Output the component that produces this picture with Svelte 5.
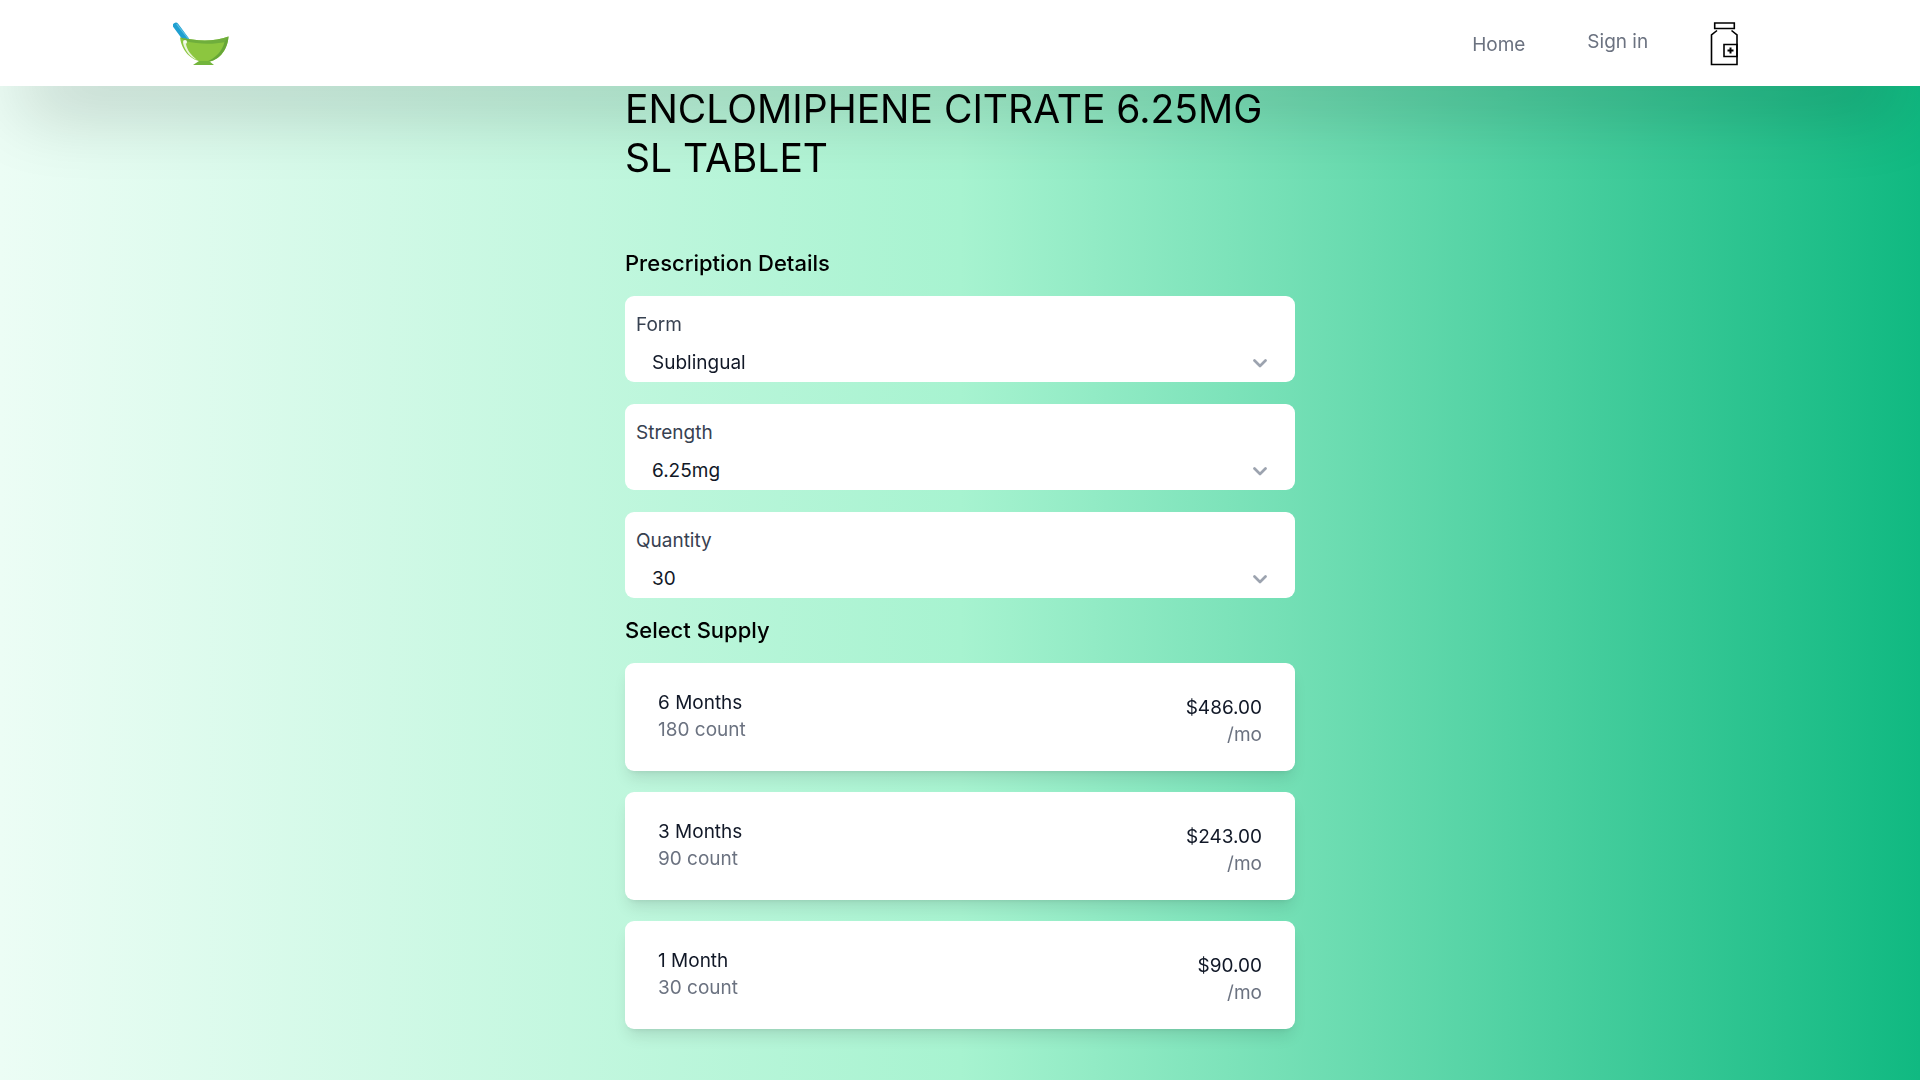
<script>
  const fields = [
    { id: 'form', label: 'Form', options: ['Sublingual'] },
    { id: 'strength', label: 'Strength', options: ['6.25mg'] },
    { id: 'quantity', label: 'Quantity', options: ['30'] },
  ];

  const supplies = [
    { id: 's6', name: '6 Months', count: '180 count', price: '$486.00' },
    { id: 's3', name: '3 Months', count: '90 count', price: '$243.00' },
    { id: 's1', name: '1 Month', count: '30 count', price: '$90.00' },
  ];

  let selected = $state('');
</script>

<div class="page">
  <header class="topbar">
    <a class="logo" href="/" aria-label="Home page">
      <svg viewBox="0 0 58 44" width="58" height="44" aria-hidden="true">
        <path d="M2.800 3.500 13.500 18" stroke="#1f9fd0" stroke-width="5.800" stroke-linecap="round" />
        <path d="M4 2.500 15.500 17" stroke="#5cc0e4" stroke-width="1.2" stroke-linecap="round" />
        <path d="M7 15.500C23 19 41 20 55.500 14.500c-1 15-11 25.500-23 25.500S9 31 7 15.500z" fill="#8cc63f" />
        <path d="M7 15.500C23 19 41 20 55.500 14.500l-3 5.500c-14 3-28 2-40-1z" fill="#6fae3c" />
        <path d="M55.500 14.500c-1 14-10 24.500-22 25.500 9-4 16-11 18-20z" fill="#66a637" />
        <path d="M10 21c2 8 7 14 14 17-6-5-10-10-11-16z" fill="#e8f5d8" />
        <circle cx="12" cy="20" r="2" fill="#f4faeb" />
        <path d="M26 39h10l5 4H20z" fill="#73b53c" />
      </svg>
    </a>
    <nav class="nav">
      <a class="home" href="/">Home</a>
      <a class="signin" href="/signin">Sign in</a>
      <a class="cart" href="/cart" aria-label="Cart">
        <svg viewBox="0 0 28 44" width="28" height="44" fill="none" stroke="#000" stroke-width="1.6" aria-hidden="true">
          <path d="M4.700 1h19.600v5.500H4.700zM7 8.500 1.500 13v29.500h25.500V13l-5.500-4.500" />
          <path d="M14 22.500h13v12H14z" />
          <path d="M20.500 25.500v6M17.500 28.500h6" stroke-width="2" />
        </svg>
      </a>
    </nav>
  </header>

  <main class="content">
    <h1>ENCLOMIPHENE CITRATE 6.25MG SL TABLET</h1>

    <h2>Prescription Details</h2>
    <div class="fields">
      {#each fields as field (field.id)}
        <div class="field">
          <label for={field.id}>{field.label}</label>
          <div class="select-wrap">
            <select id={field.id}>
              {#each field.options as option}
                <option>{option}</option>
              {/each}
            </select>
            <svg viewBox="0 0 14 9" width="14" height="9" aria-hidden="true">
              <path d="M1.500 1.500 7 7l5.500-5.500" fill="none" stroke="#9ca3af" stroke-width="2.700" stroke-linecap="round" stroke-linejoin="round" />
            </svg>
          </div>
        </div>
      {/each}
    </div>

    <h2 id="supply-title">Select Supply</h2>
    <div class="supplies" role="radiogroup" aria-labelledby="supply-title">
      {#each supplies as supply (supply.id)}
        <label class="supply">
          <input type="radio" name="supply" value={supply.id} bind:group={selected} />
          <span class="info">
            <span class="strong">{supply.name}</span>
            <span>{supply.count}</span>
          </span>
          <span class="price">
            <span class="strong">{supply.price}</span>
            <span>/mo</span>
          </span>
        </label>
      {/each}
    </div>
  </main>
</div>

<style>
  :global(body) {
    margin: 0;
  }

  .page {
    box-sizing: border-box;
    min-height: 100vh;
    background: linear-gradient(to right, #ecfdf5, #a7f3d0, #10b981);
    font-family: Inter, 'Liberation Sans', sans-serif;
    font-size: 19px;
    line-height: 27px;
    color: #111827;
  }

  a {
    color: #6b7280;
    text-decoration: none;
  }

  svg {
    display: block;
  }

  .topbar {
    position: fixed;
    inset: 0 0 auto;
    box-sizing: border-box;
    height: 86px;
    padding: 2px 9% 0;
    display: flex;
    justify-content: space-between;
    align-items: center;
    background: #fff;
    box-shadow: 0 42px 72px -22px rgb(0 0 0 / 23%);
  }

  .nav {
    display: flex;
    align-items: center;
    gap: 62px;
    padding-right: 9px;
  }

  .signin {
    padding-bottom: 5px;
  }

  .content {
    position: relative;
    box-sizing: border-box;
    max-width: 670px;
    margin: 0 auto;
    padding: 84px 0 50px;
  }

  h1 {
    margin: 0 0 66px;
    font-size: 39px;
    line-height: 49px;
    font-weight: 400;
    color: #000;
  }

  h2 {
    margin: 0 0 18px;
    font-size: 22px;
    line-height: 30px;
    font-weight: 500;
    color: #000;
  }

  .fields {
    display: grid;
    gap: 22px;
    margin-bottom: 17px;
  }

  .field {
    display: grid;
    gap: 11px;
    padding: 15px 11px 6px;
    border-radius: 9px;
    background: #fff;
  }

  .field label {
    color: #374151;
  }

  .select-wrap {
    display: grid;
    align-items: center;
  }

  .select-wrap > * {
    grid-area: 1 / 1;
  }

  .select-wrap svg {
    justify-self: end;
    margin: 1px 17px 0 0;
    pointer-events: none;
  }

  select {
    appearance: none;
    width: 100%;
    height: 27px;
    padding: 0 16px;
    border: 0;
    background: transparent;
    font: inherit;
    color: #111827;
  }

  .supplies {
    display: grid;
    gap: 21px;
  }

  .supply {
    display: flex;
    justify-content: space-between;
    padding: 26px 33px 23px;
    border-radius: 9px;
    background: #fff;
    box-shadow:
      0 10px 15px -3px rgb(0 0 0 / 10%),
      0 4px 6px -4px rgb(0 0 0 / 10%);
    color: #6b7280;
    cursor: pointer;
  }

  .supply input {
    appearance: none;
    width: 0;
    height: 0;
    margin: 0;
  }

  .supply:has(input:focus-visible) {
    outline: 2px solid #10b981;
  }

  .info {
    display: grid;
    align-content: start;
    flex: 1;
  }

  .price {
    display: grid;
    padding-top: 5px;
    text-align: right;
  }

  .strong {
    color: #111827;
  }
</style>
